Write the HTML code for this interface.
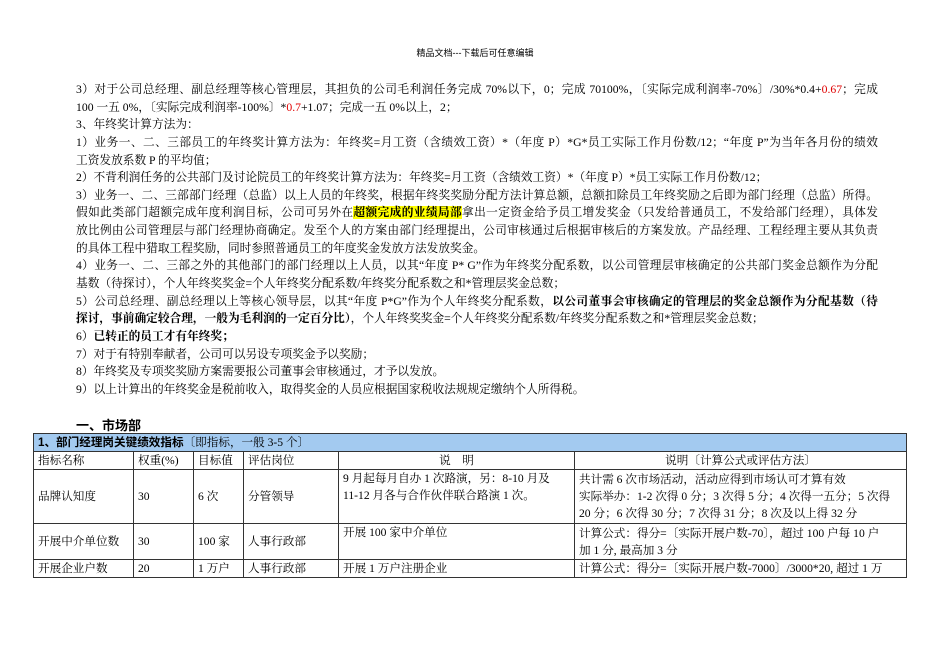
<!DOCTYPE html>
<html><head><meta charset="utf-8"><style>
body{margin:0;width:950px;height:672px;background:#fff;font-family:"Liberation Serif","Noto Serif CJK SC",serif;color:#000;position:relative;overflow:hidden}
.hd{position:absolute;top:46px;left:0;width:950px;text-align:center;font-size:9px;font-family:"Liberation Sans","Noto Sans CJK SC",sans-serif}
.txt{position:absolute;left:76px;top:81px;width:802px;font-size:11.7px;line-height:17.65px}
.txt div{white-space:nowrap;height:17.65px}
.txt .j{text-align:justify;text-align-last:justify}
.r{color:#e00000}
.hl{background:#ffff00;font-weight:bold}
b{font-weight:bold}
.h1{position:absolute;left:76px;top:415px;font-size:13px;font-weight:bold;font-family:"Liberation Sans","Noto Sans CJK SC",sans-serif}
table{position:absolute;left:33px;top:433px;border-collapse:collapse;font-size:11.6px;table-layout:fixed;width:873px}
td{border:1px solid #333;padding:0 4px;line-height:17px;vertical-align:middle}
.blue td{background:#a3caf0;height:16px;font-size:11.6px}
</style></head><body>
<div class="hd">精品文档---下载后可任意编辑</div>
<div class="txt">
<div class="j">3）对于公司总经理、副总经理等核心管理层，其担负的公司毛利润任务完成 70%以下，0；完成 70100%，〔实际完成利润率-70%〕/30%*0.4+<span class="r">0.67</span>；完成</div>
<div>100 一五 0%，〔实际完成利润率-100%〕*<span class="r">0.7</span>+1.07；完成一五 0%以上，2；</div>
<div>3、年终奖计算方法为：</div>
<div class="j">1）业务一、二、三部员工的年终奖计算方法为：年终奖=月工资（含绩效工资）*（年度 P）*G*员工实际工作月份数/12；“年度 P”为当年各月份的绩效</div>
<div>工资发放系数 P 的平均值；</div>
<div>2）不背利润任务的公共部门及讨论院员工的年终奖计算方法为：年终奖=月工资（含绩效工资）*（年度 P）*员工实际工作月份数/12；</div>
<div class="j">3）业务一、二、三部部门经理（总监）以上人员的年终奖，根据年终奖奖励分配方法计算总额，总额扣除员工年终奖励之后即为部门经理（总监）所得。</div>
<div class="j">假如此类部门超额完成年度利润目标，公司可另外在<span class="hl">超额完成的业绩局部</span>拿出一定资金给予员工增发奖金（只发给普通员工，不发给部门经理），具体发</div>
<div class="j">放比例由公司管理层与部门经理协商确定。发至个人的方案由部门经理提出，公司审核通过后根据审核后的方案发放。产品经理、工程经理主要从其负责</div>
<div>的具体工程中猎取工程奖励，同时参照普通员工的年度奖金发放方法发放奖金。</div>
<div class="j">4）业务一、二、三部之外的其他部门的部门经理以上人员，以其“年度 P* G”作为年终奖分配系数，以公司管理层审核确定的公共部门奖金总额作为分配</div>
<div>基数（待探讨），个人年终奖奖金=个人年终奖分配系数/年终奖分配系数之和*管理层奖金总数；</div>
<div class="j">5）公司总经理、副总经理以上等核心领导层，以其“年度 P*G”作为个人年终奖分配系数，<b>以公司董事会审核确定的管理层的奖金总额作为分配基数（待</b></div>
<div><b>探讨，事前确定较合理，一般为毛利润的一定百分比）</b>，个人年终奖奖金=个人年终奖分配系数/年终奖分配系数之和*管理层奖金总数；</div>
<div>6）<b>已转正的员工才有年终奖；</b></div>
<div>7）对于有特别奉献者，公司可以另设专项奖金予以奖励；</div>
<div>8）年终奖及专项奖奖励方案需要报公司董事会审核通过，才予以发放。</div>
<div>9）以上计算出的年终奖金是税前收入，取得奖金的人员应根据国家税收法规规定缴纳个人所得税。</div>
</div>
<div class="h1">一、市场部</div>
<table>
<colgroup><col style="width:100px"><col style="width:60px"><col style="width:50px"><col style="width:95px"><col style="width:236px"><col style="width:332px"></colgroup>
<tr class="blue"><td colspan="6"><b style="font-family:'Liberation Sans','Noto Sans CJK SC',sans-serif">1、部门经理岗关键绩效指标</b>〔即指标，一般 3-5 个〕</td></tr>
<tr><td>指标名称</td><td>权重(%)</td><td>目标值</td><td>评估岗位</td><td style="text-align:center">说　明</td><td style="text-align:center">说明〔计算公式或评估方法〕</td></tr>
<tr style="height:54px"><td>品牌认知度</td><td>30</td><td>6 次</td><td>分管领导</td><td style="vertical-align:top">9 月起每月自办 1 次路演，另：8-10 月及<br>11-12 月各与合作伙伴联合路演 1 次。</td><td>共计需 6 次市场活动，活动应得到市场认可才算有效<br>实际举办：1-2 次得 0 分；3 次得 5 分；4 次得一五分；5 次得<br>20 分；6 次得 30 分；7 次得 31 分；8 次及以上得 32 分</td></tr>
<tr style="height:36px"><td>开展中介单位数</td><td>30</td><td>100 家</td><td>人事行政部</td><td style="vertical-align:top">开展 100 家中介单位</td><td>计算公式：得分=〔实际开展户数-70〕，超过 100 户每 10 户<br>加 1 分, 最高加 3 分</td></tr>
<tr style="height:18px"><td>开展企业户数</td><td>20</td><td>1 万户</td><td>人事行政部</td><td>开展 1 万户注册企业</td><td style="white-space:nowrap;overflow:hidden">计算公式：得分=〔实际开展户数-7000〕/3000*20, 超过 1 万</td></tr>
</table>
</body></html>
